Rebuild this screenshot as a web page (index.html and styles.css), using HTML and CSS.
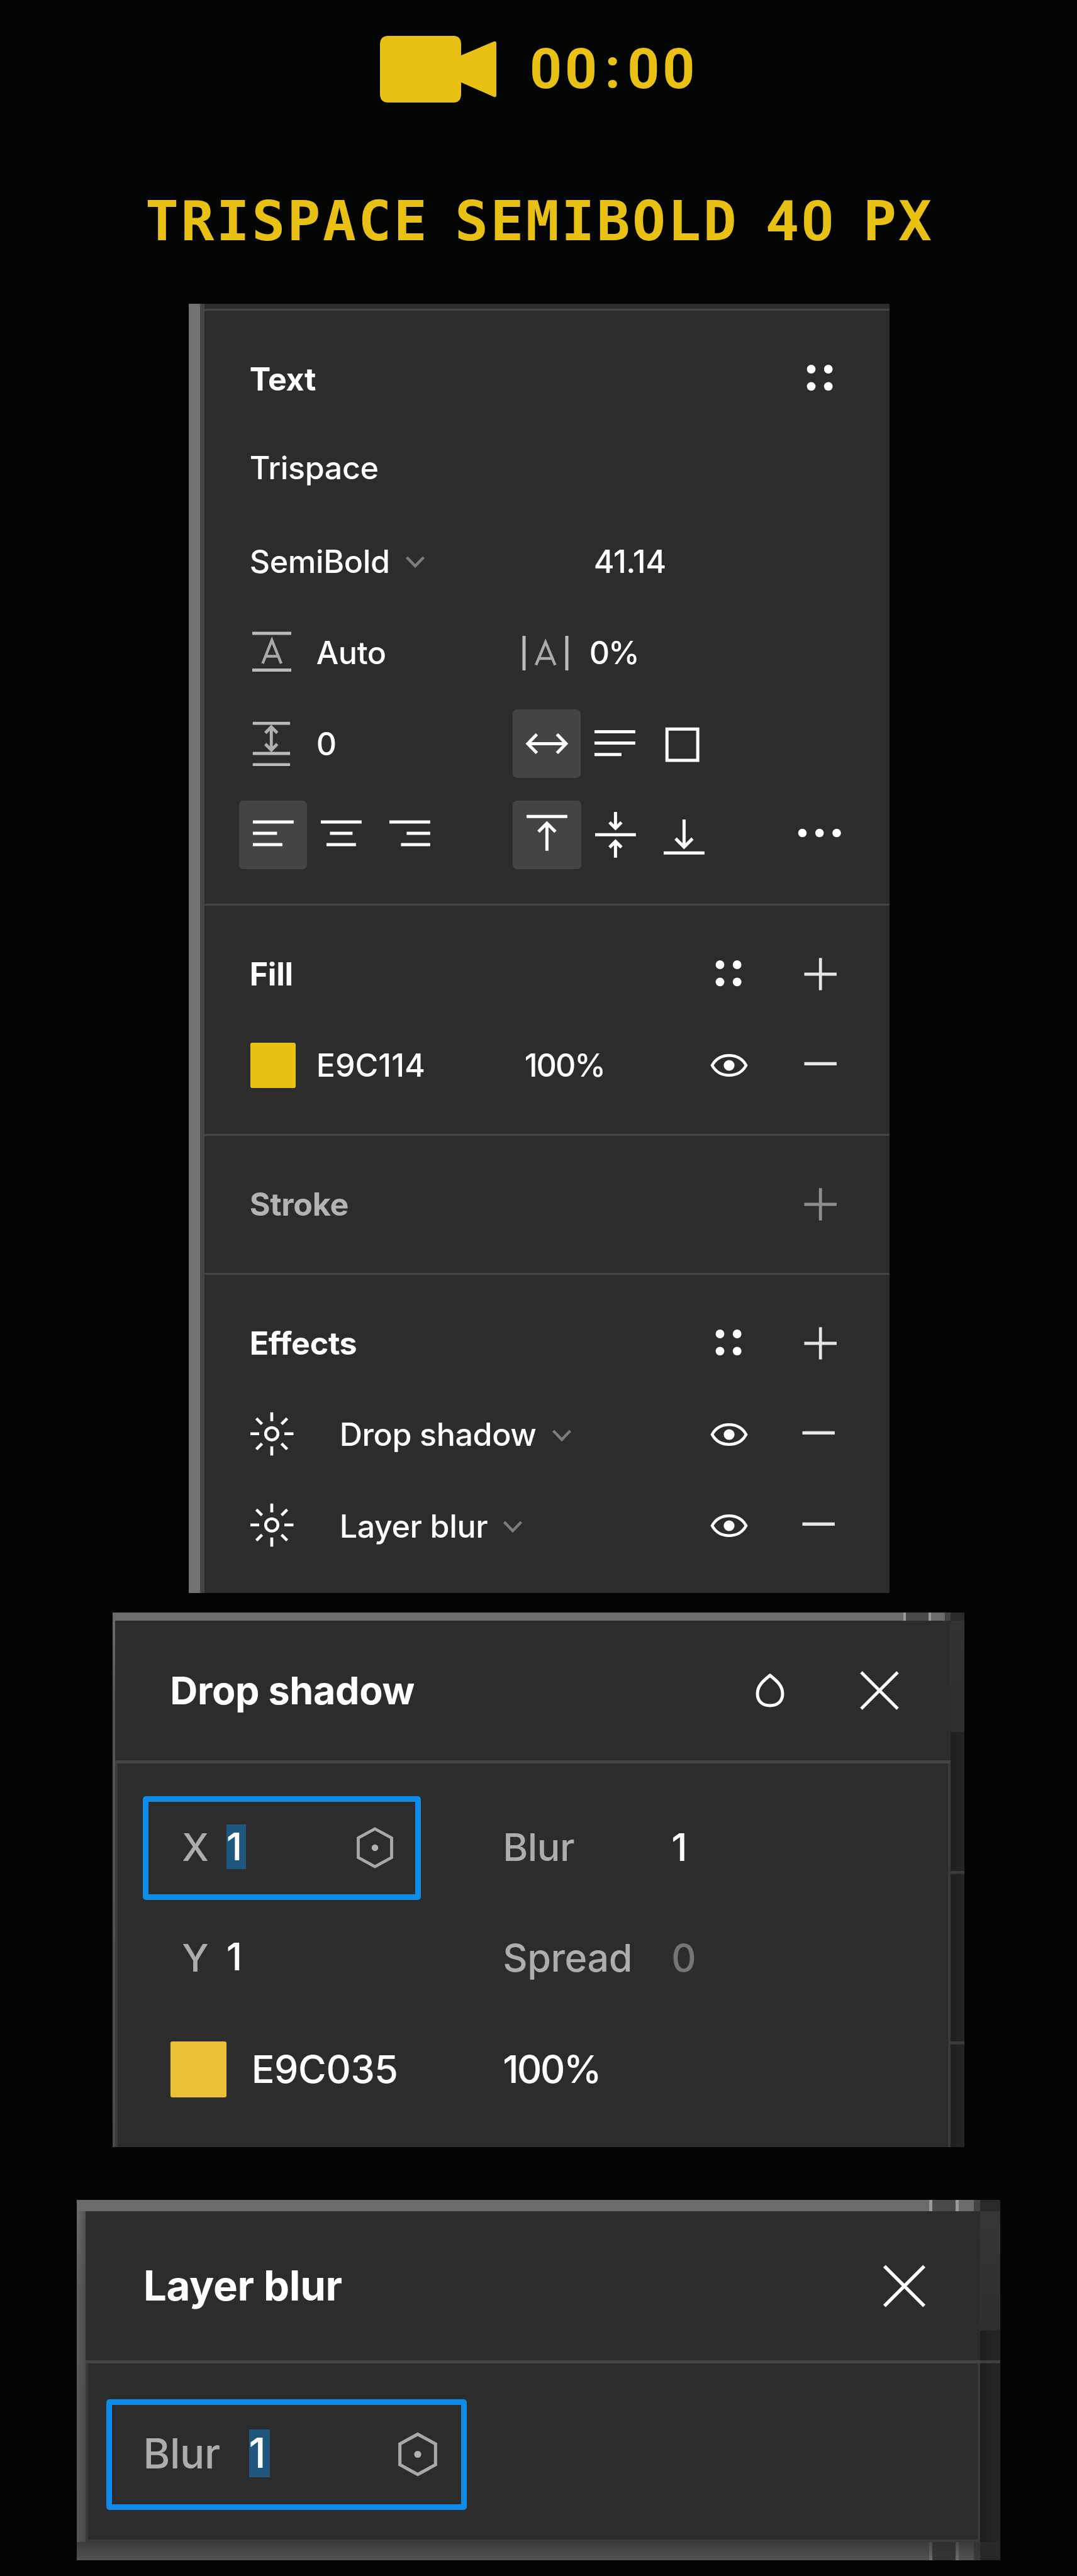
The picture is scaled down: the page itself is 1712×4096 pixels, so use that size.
FILE: index.html
```html
<!DOCTYPE html>
<html lang="en">
<head>
<meta charset="utf-8">
<title>Type settings</title>
<link rel="stylesheet" href="styles.css">
</head>
<body>
<svg class="defs" aria-hidden="true">
  <symbol id="grip" viewBox="0 0 72 72"><g fill="#fff"><circle cx="21.500" cy="21" r="6.900"/><circle cx="48.700" cy="21" r="6.900"/><circle cx="21.500" cy="48.300" r="6.900"/><circle cx="48.700" cy="48.300" r="6.900"/></g></symbol>
  <symbol id="plus" viewBox="0 0 72 72"><path d="M10.500 36H61.900M36.200 10.300V61.500" fill="none" stroke="currentColor" stroke-width="4.800"/></symbol>
  <symbol id="minus" viewBox="0 0 72 72"><path d="M10.500 33.300H61.900" fill="none" stroke="currentColor" stroke-width="5.200"/></symbol>
  <symbol id="eye" viewBox="0 0 72 72"><path d="M9 36C14.500 26 24 20.300 36 20.300S57.500 26 63 36C57.500 46 48 51.700 36 51.700S14.500 46 9 36Z" fill="none" stroke="#fff" stroke-width="4.600"/><circle cx="36" cy="36" r="8.600" fill="#fff"/></symbol>
  <symbol id="sun" viewBox="0 0 72 72"><g fill="none" stroke="#fff" stroke-width="4.600"><circle cx="35" cy="34.800" r="9.800"/><path d="M35 0.800V14.800M35 54.800V69.300M1 34.800H15M55 34.800H69.500M10.500 10.300L19.500 19.300M59.500 10.300L50.500 19.300M10.500 59.300L19.500 50.300M59.500 59.300L50.500 50.300"/></g></symbol>
  <symbol id="chevron" viewBox="0 0 34 24"><path d="M3.500 4L17 18L30.500 4" fill="none" stroke="#7c7c7c" stroke-width="4.400"/></symbol>
  <symbol id="hex" viewBox="0 0 58 66"><path d="M29 3L55.500 17.500V48.500L29 63L2.500 48.500V17.500Z" fill="none" stroke="#a9a9a9" stroke-width="4.800"/><circle cx="29" cy="33" r="5.200" fill="#b0b0b0"/></symbol>
  <symbol id="close" viewBox="0 0 64 66"><path d="M3 4L61 62M61 4L3 62" fill="none" stroke="#fff" stroke-width="5"/></symbol>
</svg>

<header class="timer">
  <svg class="camera" viewBox="0 0 186 106"><path d="M13 0H117Q129 0 129 14V31L181 9Q185 7.500 185 12V94Q185 98.500 181 97L129 74V92Q129 106 117 106H13Q0 106 0 92V14Q0 0 13 0Z" fill="#e9c114"/></svg>
  <span class="digits">00<span class="colon">:</span>00</span>
</header>

<h1 class="headline"><span class="w1">TRISPACE</span> <span class="w2">SEMIBOLD</span> <span class="w3 digits">40</span> <span class="w4">PX</span></h1>

<main class="inspector">
  <div class="topline"></div>
  <section>
    <div class="row"><b>Text</b><span class="actions"><svg class="act"><use href="#grip"/></svg></span></div>
    <div class="row family">Trispace</div>
    <div class="row"><span class="col-a">SemiBold<svg class="chev wide"><use href="#chevron"/></svg></span><span class="size">41.14</span></div>
    <div class="row">
      <svg class="lead" viewBox="0 0 66 72"><path d="M4 6H66M4 64.500H66" stroke="#bbb" stroke-width="5.200"/><path d="M20.500 54L35.200 17L50 54M25.500 42.500H45" fill="none" stroke="#aaa" stroke-width="4.400"/></svg>
      <span class="lead-text">Auto</span>
      <svg class="track" viewBox="0 0 74 56"><path d="M3 0V55M71 0V55" stroke="#bbb" stroke-width="5"/><path d="M22 46.500L37.200 10L52.500 46.500M27 36H47" fill="none" stroke="#aaa" stroke-width="4.400"/></svg>
      <span class="pct">0%</span>
    </div>
    <div class="row">
      <svg class="lead" viewBox="0 0 66 74"><path d="M4 4.200H65M4 53.500H65M4 72H65" stroke="#bbb" stroke-width="5"/><path d="M34.300 11V46M24.500 20L34.300 10L44 20M24.500 38L34.300 48L44 38" fill="none" stroke="#b0b0b0" stroke-width="5"/></svg>
      <span class="lead-text resize-gap">0</span>
      <span class="toggles">
        <svg class="btn on" viewBox="0 0 109 109"><path d="M24 54.500H85M38.500 39.500L24 54.500L38.500 69.500M70.500 39.500L85 54.500L70.500 69.500"/></svg>
        <svg class="btn" viewBox="0 0 109 109"><path d="M22 35.500H87M22 53.700H87M22 71.800H65"/></svg>
        <svg class="btn" viewBox="0 0 109 109"><path d="M28.300 31.200H77.300V81.200H28.300Z"/></svg>
      </span>
    </div>
    <div class="row aligns">
      <span class="toggles left">
        <svg class="btn on" viewBox="0 0 109 109"><path d="M22 34H87M22 52.100H60.500M22 70.100H69"/></svg>
        <svg class="btn" viewBox="0 0 109 109"><path d="M22 34H87M36.500 52.100H72.500M31 70.100H78"/></svg>
        <svg class="btn" viewBox="0 0 109 109"><path d="M22 34H87M49.500 52.100H87M40.500 70.100H87"/></svg>
      </span>
      <span class="toggles">
        <svg class="btn on" viewBox="0 0 109 109"><path d="M22 25.200H87M54.500 36V80M41 49.500L54.500 36L68 49.500"/></svg>
        <svg class="btn" viewBox="0 0 109 109"><path d="M22 54.300H87M54.500 18V44M45 34.500L54.500 44L64 34.500M54.500 91V65M45 74.500L54.500 65L64 74.500"/></svg>
        <svg class="btn" viewBox="0 0 109 109"><path d="M22 83.400H87M54.500 30V74M41 60.500L54.500 74L68 60.500"/></svg>
      </span>
      <span class="actions"><svg class="act" viewBox="0 0 72 72"><g fill="#fff"><circle cx="7.500" cy="32.500" r="6.800"/><circle cx="34.700" cy="32.500" r="6.800"/><circle cx="62" cy="32.500" r="6.800"/></g></svg></span>
    </div>
  </section>
  <section>
    <div class="row"><b>Fill</b><span class="actions"><svg class="act"><use href="#grip"/></svg><svg class="act"><use href="#plus"/></svg></span></div>
    <div class="row"><i class="swatch"></i><span class="hexval">E9C114</span><span class="pct">100%</span><span class="actions"><svg class="act"><use href="#eye"/></svg><svg class="act"><use href="#minus"/></svg></span></div>
  </section>
  <section class="muted">
    <div class="row"><b>Stroke</b><span class="actions"><svg class="act"><use href="#plus"/></svg></span></div>
  </section>
  <section class="last">
    <div class="row"><b>Effects</b><span class="actions"><svg class="act"><use href="#grip"/></svg><svg class="act"><use href="#plus"/></svg></span></div>
    <div class="row"><svg class="sun"><use href="#sun"/></svg><span>Drop shadow</span><svg class="chev"><use href="#chevron"/></svg><span class="actions fx"><svg class="act"><use href="#eye"/></svg><svg class="act"><use href="#minus"/></svg></span></div>
    <div class="row"><svg class="sun"><use href="#sun"/></svg><span>Layer blur</span><svg class="chev"><use href="#chevron"/></svg><span class="actions fx"><svg class="act"><use href="#eye"/></svg><svg class="act"><use href="#minus"/></svg></span></div>
  </section>
</main>

<article class="shot shadow-shot">
  <div class="edge"></div>
  <div class="body">
    <div class="gutter"></div>
    <div class="dialog">
      <div class="head"><b>Drop shadow</b>
        <svg class="drop" viewBox="0 0 46 54"><path d="M23 3C31 9.500 43 18 43 32C43 44 35 51 23 51S3 44 3 32C3 18 15 9.500 23 3Z" fill="none" stroke="#fff" stroke-width="5"/></svg>
        <svg class="close"><use href="#close"/></svg></div>
      <div class="fields">
        <div class="input"><span class="key">X</span><span class="sel">1</span><svg class="hex"><use href="#hex"/></svg></div>
        <div class="pair"><span class="dim">Blur</span><span>1</span></div>
        <div class="plain"><span class="key">Y</span><span class="val">1</span></div>
        <div class="pair"><span class="dim">Spread</span><span class="faint">0</span></div>
        <div class="color"><i class="swatch"></i><span>E9C035</span></div>
        <div class="pair"><span class="pct">100%</span></div>
      </div>
    </div>
    <div class="side"></div>
  </div>
</article>

<article class="shot blur-shot">
  <div class="edge"></div>
  <div class="body">
    <div class="gutter"></div>
    <div class="dialog">
      <div class="head"><b>Layer blur</b><svg class="close"><use href="#close"/></svg></div>
      <div class="fields">
        <div class="input"><span class="key">Blur</span><span class="sel">1</span><svg class="hex"><use href="#hex"/></svg></div>
      </div>
    </div>
    <div class="side"></div>
  </div>
  <div class="edge foot"></div>
</article>
</body>
</html>
```

FILE: styles.css
```css
* { box-sizing: border-box; }

body {
  margin: 0;
  width: 1712px;
  height: 4096px;
  overflow: hidden;
  background: #030502;
  color: #fff;
  font-family: Inter, "Liberation Sans", sans-serif;
  font-weight: 500;
  letter-spacing: -0.4px;
  display: flex;
  flex-direction: column;
}

svg { display: block; flex: none; }
b { font-weight: 650; letter-spacing: -0.3px; }
.defs { position: absolute; width: 0; height: 0; }

/* Timer and headline */
.timer {
  display: flex;
  height: 106px;
  margin: 57px 0 0 604px;
  color: #e9c114;
}
.camera { width: 186px; height: 106px; }
.digits { font-family: Roboto, sans-serif; font-weight: 700; }
.timer .digits {
  font-size: 89px;
  line-height: 106px;
  margin-left: 52px;
  letter-spacing: 5px;
}
.colon { padding: 0 6px 0 7px; }
.headline {
  margin: 133px 0 0 231px;
  height: 111px;
  display: flex;
  align-items: baseline;
  color: #e9c114;
  font: 700 88px/112px "DejaVu Sans Mono", monospace;
  white-space: nowrap;
}
.headline .w1, .headline .w2 { width: 492px; letter-spacing: 3.400px; flex: none; }
.headline .w3 { width: 159px; margin-left: 3px; font-size: 89px; flex: none; letter-spacing: 5px; }
.headline .w4 { letter-spacing: 3px; margin-left: -5px; }

/* Inspector panel */
.inspector {
  width: 1113.500px;
  height: 2050.300px;
  margin: 75.500px 0 0 300.200px;
  flex: none;
  border-left: 18px solid #727272;
  box-shadow: inset 7px 0 #444;
  padding-left: 7px;
  background: #2c2c2c;
  font-size: 50.200px;
}
.topline { height: 11px; border-bottom: 3.650px solid #444; }
section { padding: 36.400px 0; border-bottom: 3.650px solid #444; }
section.last { border: 0; }
.row {
  display: flex;
  align-items: center;
  height: 145.200px;
  padding: 0 73.600px 0 71.500px;
  white-space: nowrap;
}
.row.family { height: 136.800px; margin-bottom: 7.600px; }
.muted { color: #b3b3b3; }
.muted .actions { color: #8e8e8e; }
.actions { display: flex; gap: 73px; margin-left: auto; color: #e6e6e6; }
.act { width: 72px; height: 72px; }
.fx { margin-right: 3px; }
.fx .act:first-child { margin-right: -3px; }
.col-a { display: flex; align-items: center; width: 547px; }
.chev { width: 34px; height: 24px; margin: 4px 0 0 23px; }
.lead { width: 66px; height: 72px; }
.lead-text { width: 325px; margin-left: 40px; }
.track { width: 74px; height: 56px; margin: 3px 33px 0 2px; }
.resize-gap { width: 312px; }
.toggles { display: flex; }
.btn {
  width: 108.800px;
  height: 108.800px;
  border-radius: 7px;
  fill: none;
  stroke: #fff;
  stroke-width: 5;
}
.btn.on { background: #444; }
.aligns { padding-left: 54.500px; }
.toggles.left { margin-right: 109.200px; }
.swatch { width: 72px; height: 72.500px; border-radius: 3px; background: #e9c114; }
.inspector .swatch { margin-left: 1px; }
.hexval { width: 331px; margin-left: 33px; letter-spacing: 0; }
.pct { letter-spacing: -0.04em; }
.sun { width: 72px; height: 72px; margin-right: 71px; }

/* Cropped dialogs */
.shot { flex: none; display: flex; flex-direction: column; background: #242424; }
.body { display: flex; flex: 1; }
.dialog { background: #2c2c2c; flex: none; display: flex; flex-direction: column; }
.head { display: flex; align-items: center; flex: none; border-bottom: 5px solid #444; }
.gutter { flex: none; background: linear-gradient(#6b6b6b, #555 15%, #4a4a4a); }
.input { display: flex; align-items: center; border: 9px solid #0d8ce9; border-radius: 5px; }
.key, .dim { color: #adadad; }
.faint { color: #757575; }
.sel { background: #20577f; }
.side { flex: 1; }

.shadow-shot {
  width: 1354.500px;
  height: 849.700px;
  margin: 31.400px 0 0 178.900px;
  font-size: 61px;
}
.shadow-shot .edge {
  height: 13px;
  background: linear-gradient(90deg, #6b6b6b 1256.700px, #999 1256.700px 1261.200px, #4a4a4a 1261.200px 1296.800px, #999 1296.800px 1301.300px, #6b6b6b 1301.300px 1323.400px, #434343 1323.400px 1331.900px, #2a2a2a 1331.900px);
}
.shadow-shot .gutter { width: 4.300px; }
.shadow-shot .dialog { width: 1327.600px; }
.shadow-shot .head { height: 226.400px; padding: 0 81px 0 87px; }
.drop { width: 46px; height: 54px; margin-left: auto; }
.close { width: 64px; height: 66px; }
.drop + .close { margin-left: 119px; }
.shadow-shot .fields {
  flex: 1;
  border: solid #3a3a3a;
  border-width: 0 4.500px;
  padding: 46.500px 0 0 40px;
  display: grid;
  grid-template-columns: 572px 1fr;
  grid-template-rows: 176.900px 176.900px 176.900px;
  align-items: center;
}
.shadow-shot .input { width: 442px; height: 164.300px; padding-left: 53px; }
.shadow-shot .key { width: 70.500px; }
.plain { display: flex; padding-left: 62px; }
.input span, .plain, .pair, .color { margin-top: -4px; }
.input .hex { margin-top: -1px; }
.shadow-shot .sel, .shadow-shot .val { width: 31.400px; line-height: 71px; }
.shadow-shot .hex { width: 58px; height: 66px; margin-left: auto; margin-right: 35px; }
.pair { display: flex; }
.dim { width: 268px; }
.color { display: flex; align-items: center; padding-left: 44px; }
.shadow-shot .swatch { width: 88.500px; height: 88.700px; background: #e9c035; margin-right: 40px; }
.shadow-shot .side {
  background: linear-gradient(#333, #2e2e2e) 0 0 / 100% 177.400px no-repeat,
    linear-gradient(#3b3b3b, #3b3b3b) 0 398px / 100% 4.500px no-repeat,
    linear-gradient(#3b3b3b, #3b3b3b) 0 669px / 100% 4.500px no-repeat,
    linear-gradient(90deg, #1f1f1f, #252525);
}

.blur-shot {
  width: 1468.700px;
  height: 573.200px;
  margin: 83.800px 0 0 121.500px;
  font-size: 65.300px;
}
.blur-shot .edge {
  height: 18.700px;
  background: linear-gradient(90deg, #6b6b6b 1355.300px, #999 1355.300px 1359.800px, #4a4a4a 1359.800px 1397.500px, #999 1397.500px 1402.500px, #6b6b6b 1402.500px 1426.500px, #434343 1426.500px 1436px, #2a2a2a 1436px);
}
.blur-shot .edge.foot {
  height: 28.700px;
  background: linear-gradient(rgba(44, 44, 44, .75), rgba(44, 44, 44, .4)),
    linear-gradient(90deg, #6b6b6b 1355.300px, #999 1355.300px 1359.800px, #3a3a3a 1359.800px 1397.500px, #999 1397.500px 1402.500px, #6b6b6b 1402.500px 1426.500px, #434343 1426.500px 1436px, #222 1436px);
}
.blur-shot .gutter { width: 14.500px; background: linear-gradient(90deg, rgba(70, 70, 70, 0), rgba(70, 70, 70, .7)), linear-gradient(#6d6d6d, #5c5c5c 25%, #555); }
.blur-shot .dialog { width: 1421.500px; border-radius: 0 0 7px 7px; }
.blur-shot .head { height: 241.600px; padding: 0 85px 0 92px; }
.blur-shot .close { width: 71px; height: 72px; margin-left: auto; }
.blur-shot .fields { flex: 1; border: 4.700px solid #3a3a3a; border-top: 0; padding: 57.500px 0 0 28.500px; }
.blur-shot .input { width: 573px; height: 175.300px; padding-left: 50px; }
.blur-shot .key { width: 168px; }
.blur-shot .sel { width: 33px; line-height: 75.500px; }
.blur-shot .hex { width: 62px; height: 71px; margin-left: auto; margin-right: 38px; }
.blur-shot .side {
  background: linear-gradient(#363636, #2e2e2e) 0 0 / 100% 189.500px no-repeat,
    linear-gradient(#3f3f3f, #3f3f3f) 0 237px / 100% 4.700px no-repeat,
    linear-gradient(90deg, #1d1d1d, #262626);
}
```
